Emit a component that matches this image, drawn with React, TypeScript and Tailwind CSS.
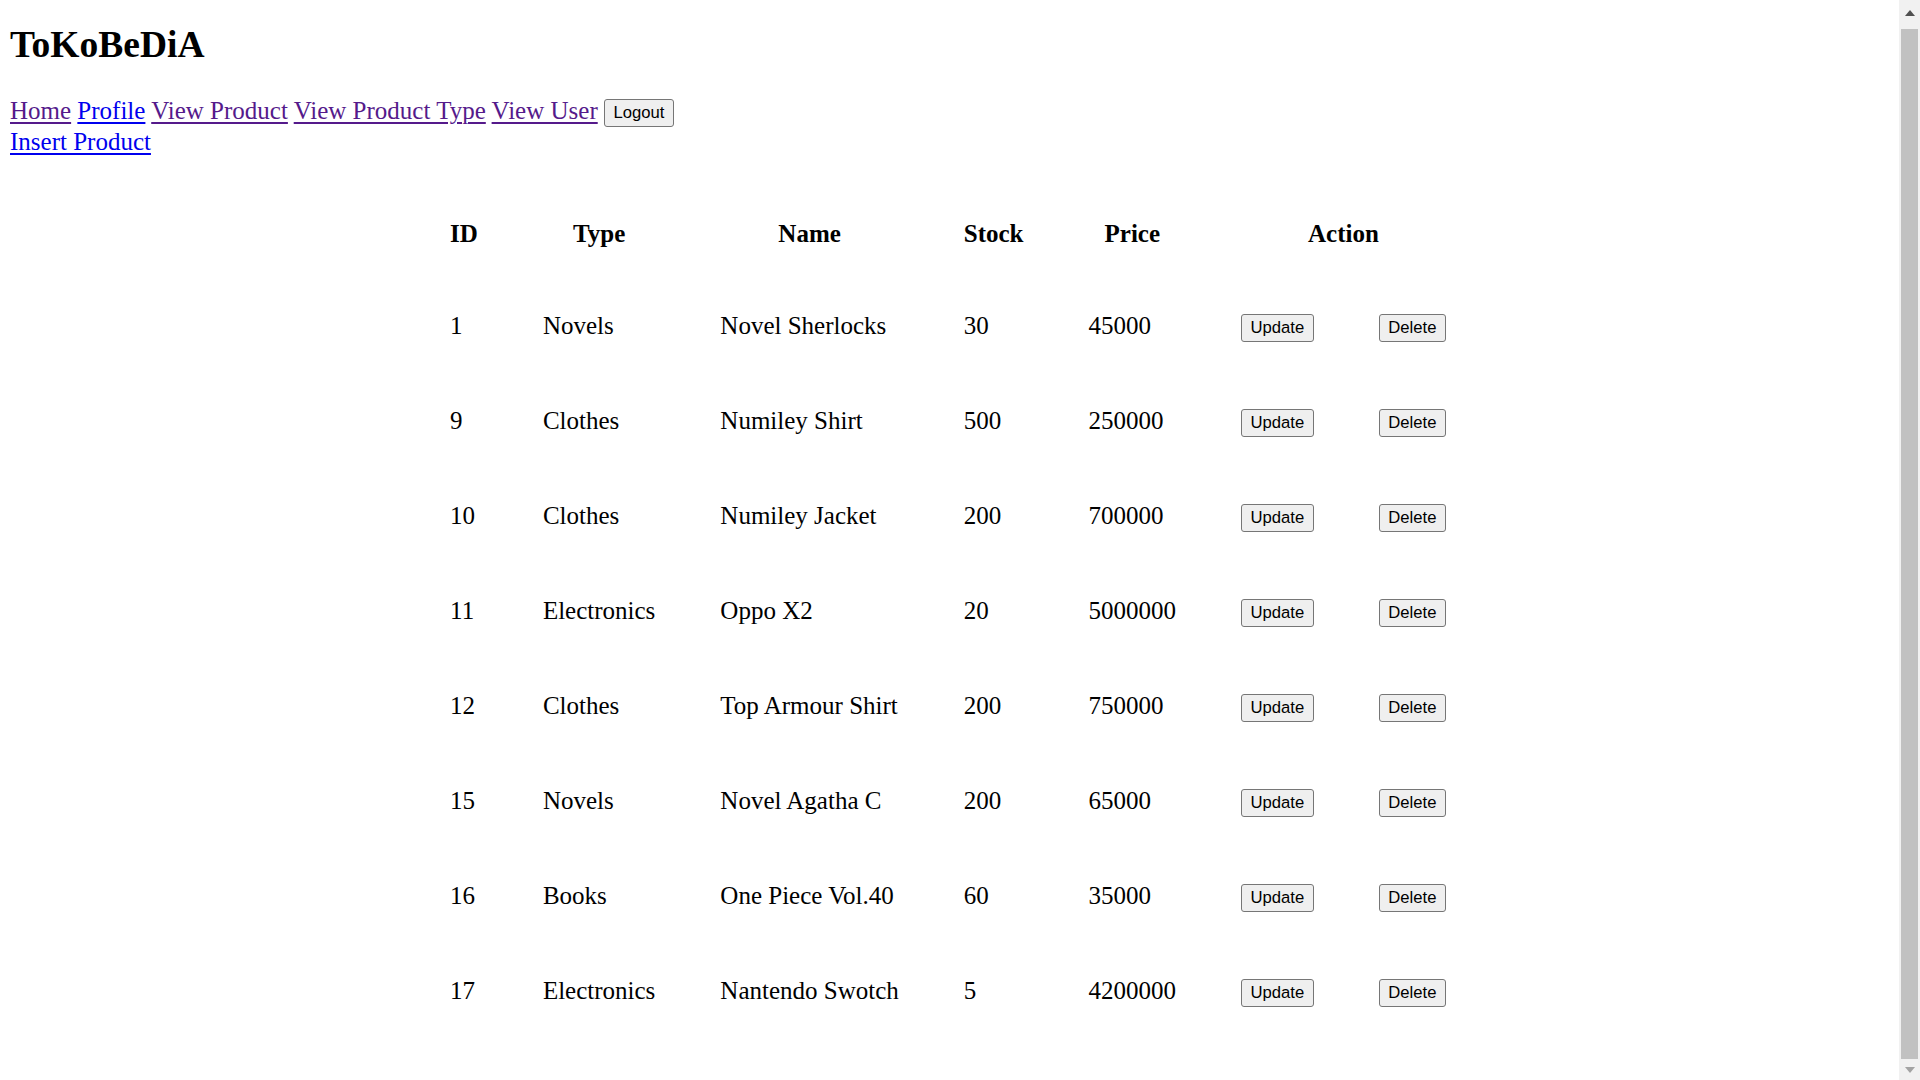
import React from "react";

type Product = { id: number; type: string; name: string; stock: number; price: number };

const products: Product[] = [
  { id: 1, type: "Novels", name: "Novel Sherlocks", stock: 30, price: 45000 },
  { id: 9, type: "Clothes", name: "Numiley Shirt", stock: 500, price: 250000 },
  { id: 10, type: "Clothes", name: "Numiley Jacket", stock: 200, price: 700000 },
  { id: 11, type: "Electronics", name: "Oppo X2", stock: 20, price: 5000000 },
  { id: 12, type: "Clothes", name: "Top Armour Shirt", stock: 200, price: 750000 },
  { id: 15, type: "Novels", name: "Novel Agatha C", stock: 200, price: 65000 },
  { id: 16, type: "Books", name: "One Piece Vol.40", stock: 60, price: 35000 },
  { id: 17, type: "Electronics", name: "Nantendo Swotch", stock: 5, price: 4200000 },
];

function Btn({ children }: { children: React.ReactNode }) {
  return (
    <button
      type="button"
      className="inline-block bg-[#efefef] border border-[#767676] rounded-[3px] px-[8.5px] py-[3.5px] text-[16.67px] leading-[19px] text-black font-['Liberation_Sans',Arial,sans-serif] align-middle"
    >
      {children}
    </button>
  );
}

const visited = "text-[#551a8b] underline decoration-[2px] underline-offset-[3px]";
const fresh = "text-[#0000ee] underline decoration-[2px] underline-offset-[3px]";

function Scrollbar() {
  return (
    <div className="w-[21px] h-[1080px] bg-[#f1f1f1] flex flex-col items-center shrink-0">
      <div className="h-[25px] w-full flex items-center justify-center">
        <svg width="10" height="6" viewBox="0 0 10 6">
          <polygon points="0,6 10,6 5,0" fill="#505050" />
        </svg>
      </div>
      <div className="mt-[4px] h-[1030px] w-[17px] bg-[#c1c1c1]" />
      <div className="flex-1 w-full flex items-center justify-center">
        <svg width="10" height="6" viewBox="0 0 10 6">
          <polygon points="0,0 10,0 5,6" fill="#a3a3a3" />
        </svg>
      </div>
    </div>
  );
}

export default function App() {
  return (
    <div className="flex w-full h-[1080px] overflow-hidden bg-white">
      <main className="flex-1 text-black font-['Liberation_Serif','Times_New_Roman',serif] px-[10px]">
        <h1 className="pt-[22.5px] h-[66px] text-[37.5px] leading-[44px] font-bold">ToKoBeDiA</h1>
        <div className="mt-[28.5px] text-[25px] leading-[32px] h-[31px] whitespace-nowrap">
          <a href="#" className={visited}>Home</a>{" "}
          <a href="#" className={fresh}>Profile</a>{" "}
          <a href="#" className={visited}>View Product</a>{" "}
          <a href="#" className={visited}>View Product Type</a>{" "}
          <a href="#" className={visited}>View User</a>{" "}
          <Btn>Logout</Btn>
        </div>
        <div className="text-[25px] leading-[32px] h-[32px]">
          <a href="#" className={fresh}>Insert Product</a>
        </div>

        <div className="mt-[32px] mx-auto w-fit pr-[3px] grid grid-cols-[repeat(7,max-content)] grid-rows-[89.5px_repeat(8,95px)] gap-x-[65px] items-center text-[25px] leading-[28.75px]">
          <div className="font-bold text-center">ID</div>
          <div className="font-bold text-center">Type</div>
          <div className="font-bold text-center">Name</div>
          <div className="font-bold text-center">Stock</div>
          <div className="font-bold text-center">Price</div>
          <div className="font-bold text-center col-span-2">Action</div>
          {products.map((p) => (
            <React.Fragment key={p.id}>
              <div>{p.id}</div>
              <div>{p.type}</div>
              <div>{p.name}</div>
              <div>{p.stock}</div>
              <div>{p.price}</div>
              <div>
                <Btn>Update</Btn>
              </div>
              <div>
                <Btn>Delete</Btn>
              </div>
            </React.Fragment>
          ))}
        </div>
      </main>
      <Scrollbar />
    </div>
  );
}
